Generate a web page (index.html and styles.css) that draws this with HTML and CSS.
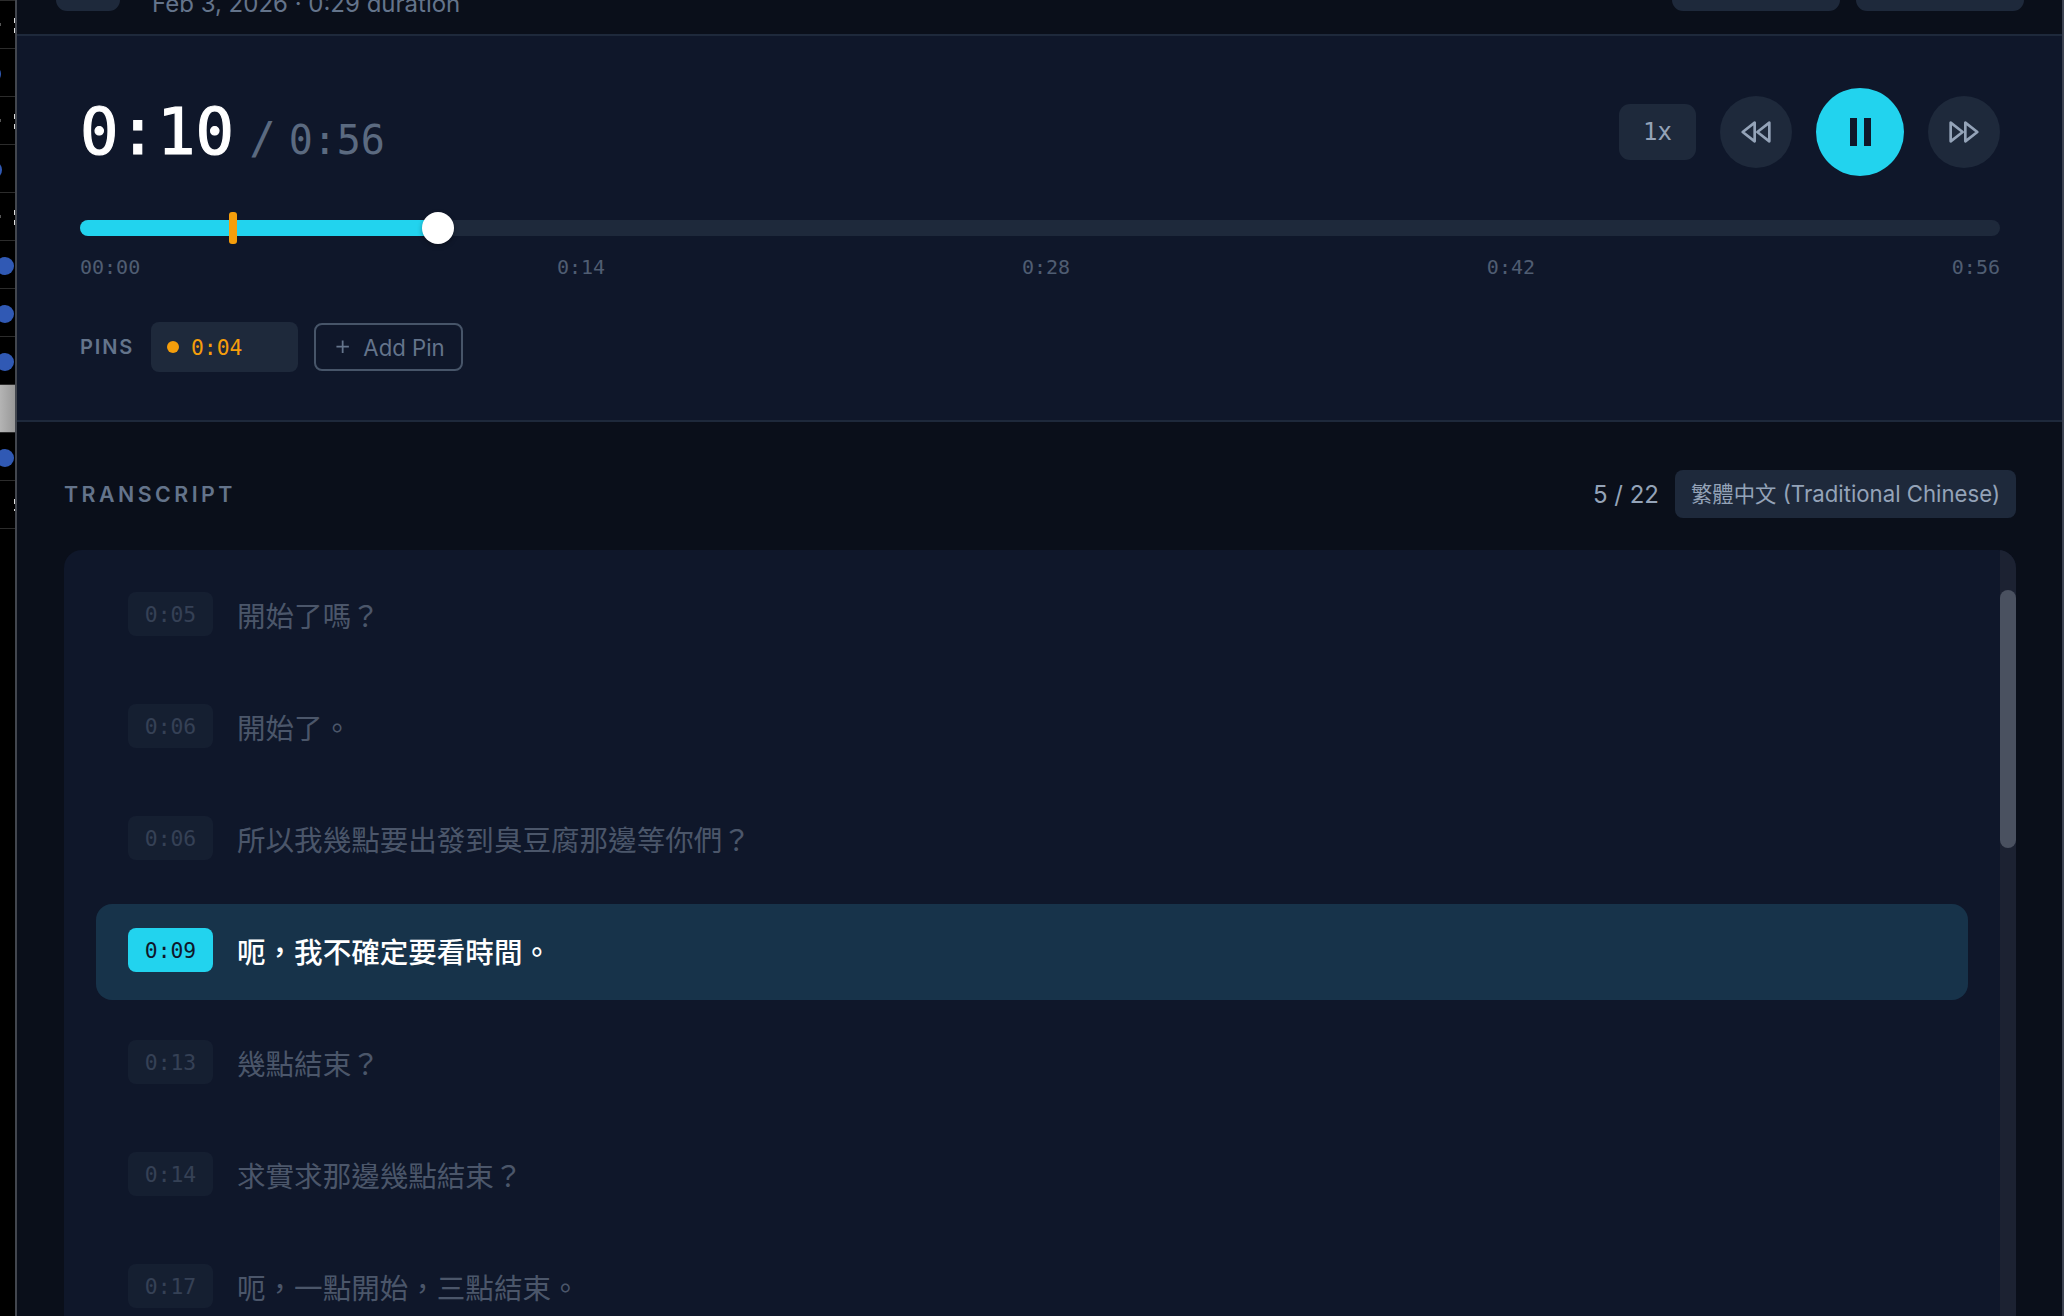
FILE: index.html
```html
<!DOCTYPE html>
<html lang="en">
<head>
    <meta charset="UTF-8">
    <meta name="viewport" content="width=device-width, initial-scale=1.0">
    <title>Recording</title>
    <link rel="stylesheet" href="styles.css">
</head>
<body>
    <!-- clipped sidebar -->
    <aside class="rail">
        <div class="rail-row"><i class="rail-ghost"></i><i class="rail-grip"></i></div>
        <div class="rail-row"><i class="rail-dot peek"></i></div>
        <div class="rail-row"><i class="rail-ghost"></i><i class="rail-grip"></i></div>
        <div class="rail-row"><i class="rail-dot peek wide"></i></div>
        <div class="rail-row"><i class="rail-ghost"></i><i class="rail-grip"></i></div>
        <div class="rail-row"><i class="rail-dot"></i></div>
        <div class="rail-row"><i class="rail-dot"></i></div>
        <div class="rail-row"><i class="rail-dot"></i></div>
        <div class="rail-row selected"></div>
        <div class="rail-row"><i class="rail-dot"></i></div>
        <div class="rail-row"><i class="rail-grip short"></i></div>
        <div class="rail-row last"></div>
    </aside>

    <main class="main">
        <header class="topbar">
            <span class="back-btn"></span>
            <span class="meta">Feb 3, 2026 · 0:29 duration</span>
            <span class="top-btn first"></span>
            <span class="top-btn"></span>
        </header>

        <section class="player">
            <div class="player-head">
                <div class="clock">
                    <span class="clock-now">0:10</span>
                    <span class="clock-slash">/</span>
                    <span class="clock-total">0:56</span>
                </div>
                <div class="controls">
                    <button class="speed-btn">1x</button>
                    <button class="round-btn">
                        <svg class="ctl-icon" viewBox="0 0 24 24"><polygon points="11 19 2 12 11 5 11 19"/><polygon points="22 19 13 12 22 5 22 19"/></svg>
                    </button>
                    <button class="play-btn">
                        <svg width="21" height="28" viewBox="0 0 21 28"><rect width="7" height="28"/><rect x="14" width="7" height="28"/></svg>
                    </button>
                    <button class="round-btn">
                        <svg class="ctl-icon" viewBox="0 0 24 24"><polygon points="13 19 22 12 13 5 13 19"/><polygon points="2 19 11 12 2 5 2 19"/></svg>
                    </button>
                </div>
            </div>

            <div class="track">
                <div class="track-fill" style="width: 18.65%"></div>
                <span class="track-pin" style="left: 149px"></span>
                <span class="track-thumb" style="left: 342px"></span>
            </div>
            <div class="ticks">
                <span>00:00</span><span>0:14</span><span>0:28</span><span>0:42</span><span>0:56</span>
            </div>

            <div class="pins">
                <span class="pins-label">PINS</span>
                <span class="pin-chip"><i class="pin-dot"></i>0:04</span>
                <button class="add-pin">
                    <svg class="plus-icon" viewBox="0 0 24 24"><path d="M5 12h14M12 5v14"/></svg>
                    Add Pin
                </button>
            </div>
        </section>

        <section class="transcript">
            <div class="transcript-head">
                <h2>TRANSCRIPT</h2>
                <span class="count">5 / 22</span>
                <span class="lang-chip">繁體中文 <span class="lang-latin">(Traditional Chinese)</span></span>
            </div>

            <div class="card">
                <div class="lines">
                    <div class="line"><span class="stamp">0:05</span><p>開始了嗎？</p></div>
                    <div class="line"><span class="stamp">0:06</span><p>開始了。</p></div>
                    <div class="line"><span class="stamp">0:06</span><p>所以我幾點要出發到臭豆腐那邊等你們？</p></div>
                    <div class="line active"><span class="stamp">0:09</span><p>呃，我不確定要看時間。</p></div>
                    <div class="line"><span class="stamp">0:13</span><p>幾點結束？</p></div>
                    <div class="line"><span class="stamp">0:14</span><p>求實求那邊幾點結束？</p></div>
                    <div class="line"><span class="stamp">0:17</span><p>呃，一點開始，三點結束。</p></div>
                </div>
                <div class="scroll-track"><div class="scroll-thumb"></div></div>
            </div>
        </section>
    </main>
</body>
</html>
```

FILE: styles.css
```css
* { box-sizing: border-box; }

html, body { height: 100%; }

body {
    margin: 0;
    height: 1316px;
    display: flex;
    overflow: hidden;
    background: #000;
    font-family: Inter, "Noto Sans CJK TC", sans-serif;
    color: #94a3b8;
}

button {
    border: none;
    padding: 0;
    font-family: inherit;
    cursor: pointer;
}

/* sidebar */
.rail {
    flex: 0 0 17px;
    background: #000;
    border-right: 2px solid #42464e;
    overflow: hidden;
}
.rail-row {
    position: relative;
    height: 48px;
    border-top: 1px solid #2c2c2c;
    display: flex;
    align-items: center;
}
.rail-row.last { height: 1px; }
.rail-row.selected { background: linear-gradient(90deg, #b4b4b4, #989898); }
.rail-dot {
    flex: none;
    width: 18px;
    height: 18px;
    margin: 2px 0 0 -4px;
    border-radius: 50%;
    background: #3059b4;
}
.rail-dot.peek { margin-left: -17px; }
.rail-dot.peek.wide { margin-left: -16px; }
.rail-grip {
    position: absolute;
    right: 0;
    top: 17px;
    width: 1px;
    height: 15px;
    background: linear-gradient(#ddd 0 5px, transparent 5px 10px, #ddd 10px);
}
.rail-grip.short { top: 18px; height: 12px; }
.rail-ghost {
    width: 1px;
    height: 3px;
    background: #555;
}

/* main column */
.main {
    flex: 1;
    min-width: 0;
    height: 1316px;
    overflow: hidden;
    display: flex;
    flex-direction: column;
    background: #0a0f1a;
    border-right: 2px solid #3c4250;
}

.topbar {
    flex: none;
    height: 36px;
    display: flex;
    align-items: flex-end;
    padding: 0 38px 16px 39px;
    border-bottom: 2px solid #1e293b;
    background: #0a0f1a;
    overflow: hidden;
}
.back-btn, .top-btn {
    flex: none;
    height: 48px;
    margin-bottom: 7px;
    background: #1e293b;
    border-radius: 11px;
}
.back-btn { width: 64px; }
.top-btn { width: 168px; margin-left: 16px; }
.top-btn.first { margin-left: auto; }
.meta {
    margin-left: 32px;
    font-size: 24px;
    line-height: 28px;
    color: #64748b;
}

/* player */
.player {
    flex: none;
    height: 386px;
    padding: 52px 62px 0 63px;
    background: #0f172a;
    border-bottom: 2px solid #1e293b;
}
.player-head {
    display: flex;
    justify-content: space-between;
    align-items: center;
    height: 88px;
}
.clock {
    display: flex;
    align-items: baseline;
    font-family: "DejaVu Sans Mono", monospace;
}
.clock-now {
    font-size: 64px;
    line-height: 76px;
    color: #fff;
    -webkit-text-stroke: 1.2px #fff;
}
.clock-slash {
    margin-left: 15px;
    font-size: 44px;
    color: #5b6a80;
}
.clock-total {
    margin-left: 13px;
    font-size: 40px;
    color: #5b6a80;
}

.controls {
    display: flex;
    align-items: center;
    gap: 24px;
}
.speed-btn {
    width: 77px;
    height: 56px;
    border-radius: 11px;
    background: #1e293b;
    color: #94a3b8;
    font-family: "DejaVu Sans Mono", monospace;
    font-size: 24px;
}
.round-btn {
    width: 72px;
    height: 72px;
    border-radius: 50%;
    background: #1e293b;
    display: flex;
    align-items: center;
    justify-content: center;
}
.ctl-icon {
    width: 32px;
    height: 32px;
    fill: none;
    stroke: #94a3b8;
    stroke-width: 2;
    stroke-linejoin: round;
}
.play-btn {
    width: 88px;
    height: 88px;
    border-radius: 50%;
    background: #22d3ee;
    display: flex;
    align-items: center;
    justify-content: center;
}
.play-btn rect { fill: #0f172a; }

.track {
    position: relative;
    height: 16px;
    margin-top: 44px;
    border-radius: 8px;
    background: #1e293b;
}
.track-fill {
    height: 100%;
    border-radius: 8px;
    background: #22d3ee;
}
.track-pin {
    position: absolute;
    top: -8px;
    width: 8px;
    height: 32px;
    border-radius: 3px;
    background: #f59e0b;
}
.track-thumb {
    position: absolute;
    top: -8px;
    width: 32px;
    height: 32px;
    border-radius: 50%;
    background: #fff;
    box-shadow: 0 2px 5px rgba(0,0,0,0.3);
}

.ticks {
    display: flex;
    justify-content: space-between;
    margin-top: 19px;
    font-family: "DejaVu Sans Mono", monospace;
    font-size: 20px;
    line-height: 24px;
    color: #4f5d72;
}

.pins {
    display: flex;
    align-items: center;
    margin-top: 43px;
    height: 50px;
}
.pins-label {
    width: 71px;
    font-size: 20px;
    font-weight: 600;
    letter-spacing: 1.9px;
    color: #64748b;
}
.pin-chip {
    width: 147px;
    height: 50px;
    padding-left: 16px;
    display: flex;
    align-items: center;
    gap: 12px;
    border-radius: 8px;
    background: #1e293b;
    color: #f59e0b;
    font-family: "DejaVu Sans Mono", monospace;
    font-size: 21.33px;
}
.pin-dot {
    width: 12px;
    height: 12px;
    border-radius: 50%;
    background: #f59e0b;
}
.add-pin {
    width: 149px;
    height: 48px;
    margin-left: 16px;
    padding-left: 16px;
    display: flex;
    align-items: center;
    gap: 10px;
    border: 2px solid #475569;
    border-radius: 8px;
    background: none;
    color: #64748b;
    font-size: 22.2px;
}
.plus-icon {
    width: 21.33px;
    height: 21.33px;
    fill: none;
    stroke: #64748b;
    stroke-width: 2;
}

/* transcript */
.transcript {
    flex: 1;
    min-height: 0;
    padding: 48px 46px 0 47px;
}
.transcript-head {
    display: flex;
    align-items: center;
    height: 48px;
    margin-bottom: 32px;
}
.transcript-head h2 {
    margin: 0 auto 0 0;
    font-size: 21.33px;
    font-weight: 600;
    letter-spacing: 3.5px;
    color: #64748b;
}
.count {
    font-size: 24px;
    color: #94a3b8;
}
.lang-chip {
    height: 48px;
    margin-left: 16px;
    padding: 0 16px;
    display: flex;
    align-items: center;
    gap: 0.3em;
    border-radius: 8px;
    background: #1e293b;
    font-size: 21.33px;
    line-height: 28px;
    color: #94a3b8;
}
.lang-latin { font-size: 22.2px; }

.card {
    height: 766px;
    display: flex;
    border-radius: 18px 18px 0 0;
    background: #0f172a;
    overflow: hidden;
}
.lines {
    flex: 1;
    min-width: 0;
    padding: 18px 32px 0;
    display: flex;
    flex-direction: column;
    gap: 16px;
}
.line {
    flex: none;
    height: 96px;
    padding: 24px 32px;
    display: flex;
    align-items: flex-start;
    gap: 24px;
    border-radius: 16px;
    opacity: 0.45;
}
.line p {
    margin: 0;
    font-size: 28.55px;
    line-height: 50px;
    color: #94a3b8;
}
.stamp {
    flex: none;
    width: 85px;
    height: 44px;
    display: flex;
    align-items: center;
    justify-content: center;
    border-radius: 8px;
    background: #1e293b;
    color: #64748b;
    font-family: "DejaVu Sans Mono", monospace;
    font-size: 21.33px;
}
.line.active {
    opacity: 1;
    background: #17334a;
}
.line.active p {
    font-weight: 500;
    color: #fff;
}
.line.active .stamp {
    background: #22d3ee;
    color: #0f172a;
}
.scroll-track {
    flex: 0 0 16px;
    padding-top: 40px;
    background: #1c2232;
}
.scroll-thumb {
    height: 258px;
    border-radius: 8px;
    background: #4a5160;
}
```
